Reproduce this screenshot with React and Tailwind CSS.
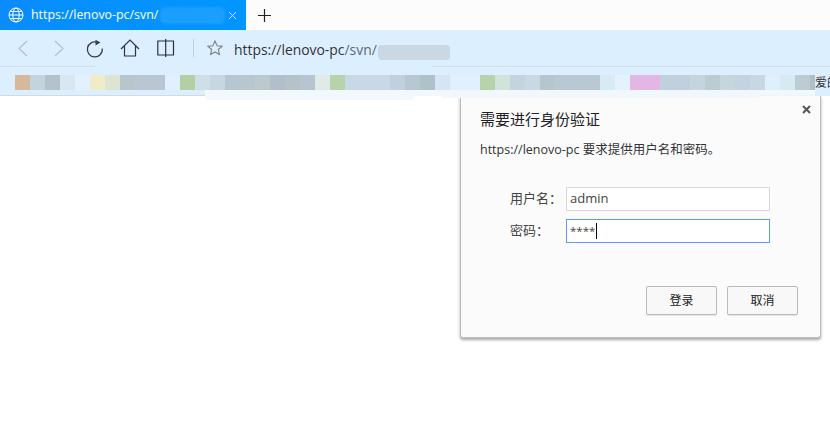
const FONT = "font-['Open_Sans','Noto_Sans_CJK_SC',sans-serif]";

const blocks = [
  ["#dcefff", 15], ["#d6b89c", 15], ["#c4d4dd", 15], ["#b3c3cb", 15], ["#d9e7f1", 15], ["#e2f1fd", 15],
  ["#f0ecc8", 15], ["#dde4d3", 15], ["#b8c5ca", 15], ["#bac7d2", 30], ["#e0f0fe", 15],
  ["#b5cfa5", 15], ["#cfdfe8", 15], ["#c7d7e2", 15], ["#b8c6cf", 30], ["#bccad0", 15], ["#b0bfca", 15], ["#b5c3c9", 15], ["#b7c5d1", 15],
  ["#e0ebe8", 15], ["#b8d2ac", 15], ["#c9d8e5", 15], ["#c8d8e4", 30], ["#c1d0dc", 15], ["#b8c7d3", 15], ["#afc1c9", 15], ["#d5e5f3", 15], ["#e0f0fd", 30],
  ["#b8d2ac", 15], ["#d0e4dc", 15], ["#c3d4de", 15], ["#c9d8e5", 15], ["#b7c6cc", 15], ["#b9c8d3", 45], ["#d7ebf3", 15], ["#e4f2fd", 15],
  ["#e4b6e4", 30], ["#c0d0dc", 30], ["#c5d4dd", 15], ["#bdccd2", 15], ["#c7d6dd", 15], ["#c3d3e0", 15], ["#c9d7e4", 15], ["#e0f0fa", 15],
  ["#d7eaf3", 15], ["#bdcbd2", 15], ["#aebfc6", 5],
];

function Globe() {
  return (
    <svg width="16" height="16" viewBox="0 0 16 16" fill="none" stroke="#fff" strokeWidth="1">
      <circle cx="8" cy="8" r="7" />
      <ellipse cx="8" cy="8" rx="3.2" ry="7" />
      <path d="M1 8h14M2 4.500h12M2 11.500h12" />
    </svg>
  );
}

function ToolbarIcons() {
  return (
    <>
      <svg className="ml-[17px]" width="11" height="17" viewBox="0 0 11 17" fill="none" stroke="#b4bfc8" strokeWidth="1.2">
        <path d="M10 1 2 8.500l8 7.500" />
      </svg>
      <svg className="ml-[26px]" width="11" height="17" viewBox="0 0 11 17" fill="none" stroke="#b4bfc8" strokeWidth="1.2">
        <path d="M1 1l8 7.500L1 16" />
      </svg>
      <svg className="ml-[21px]" width="18" height="19" viewBox="0 0 18 19" fill="none" stroke="#3a3f48" strokeWidth="1.3">
        <path d="M11.500 3.400A7.500 7.500 0 1 0 16.300 9.500" />
        <path d="M9.500.8l5 2.800-5 2.800z" fill="#3a3f48" stroke="none" />
      </svg>
      <svg className="ml-[16px]" width="20" height="18" viewBox="0 0 20 18" fill="none" stroke="#2f3440" strokeWidth="1.2">
        <path d="M1 10 10 1l9 9M4.500 7V17h11V7" />
      </svg>
      <svg className="ml-[17px]" width="18" height="18" viewBox="0 0 18 18" fill="none" stroke="#2a3040" strokeWidth="1.2">
        <path d="M.8 2h15.700v14H.8zM8.700 0v18" />
      </svg>
      <div className="ml-[18px] h-[18px] w-px bg-[#c2ced8]" />
      <svg className="ml-[13px]" width="16" height="16" viewBox="0 0 16 16" fill="none" stroke="#7c838a" strokeWidth="1.1">
        <path d="M8 1l2.100 4.700 5 .5-3.800 3.300 1.100 5L8 12l-4.400 2.500 1.100-5L.9 6.200l5-.5z" />
      </svg>
    </>
  );
}

function Field({ label, value, focused }) {
  return (
    <div className="flex items-center">
      <span className="w-[56px] text-[13px] text-[#444]">{label}</span>
      <div className={`flex h-[24px] w-[204px] items-center border px-[3px] bg-white text-[#444] ${focused ? "border-[#5b9bf5] text-[11.500px]" : "border-[#d8d8d8] text-[13px]"}`}>
        {value}
        {focused && <span className="ml-px h-[16px] w-px bg-black" />}
      </div>
    </div>
  );
}

export default function App() {
  return (
    <div className={`${FONT} h-[424px] w-[830px] overflow-hidden bg-white`}>
      <div className="flex h-[30px] bg-[#fcfcfc]">
        <div className="flex w-[246px] items-center bg-gradient-to-r from-[#0a8cfd] to-[#0096ff] pl-[8px] text-white">
          <Globe />
          <span className="ml-[7px] w-[126px] text-[12.400px] font-medium whitespace-nowrap">https://lenovo-pc/svn/</span>
          <div className="ml-[3px] h-[17px] w-[65px] rounded-md bg-[#1a9fff] blur-[1px]" />
          <svg className="ml-[3px]" width="9" height="9" viewBox="0 0 9 9" stroke="#d6edff" strokeWidth="1">
            <path d="M1 1l7 7M8 1l-7 7" />
          </svg>
        </div>
        <svg className="ml-[12px] self-center" width="13" height="13" viewBox="0 0 13 13" stroke="#222" strokeWidth="1.2">
          <path d="M6.500 0v13M0 6.500h13" />
        </svg>
      </div>

      <div className="flex h-[36px] items-center bg-[#dcefff]">
        <ToolbarIcons />
        <span className="mt-[4px] ml-[11px] w-[144px] text-[13.900px] whitespace-nowrap text-[#333]">
          https://lenovo-pc<span className="text-[#5c6a75]">/svn/</span>
        </span>
        <div className="mt-[8px] h-[15px] w-[72px] rounded-sm bg-[#c9d8e3] blur-[0.5px]" />
      </div>

      <div className="flex h-px bg-[#cfe0ec]">
        <div className="ml-[95px] w-[337px] bg-[#dcefff]" />
      </div>

      <div className="flex h-[23px] items-end overflow-hidden bg-[#dcefff]">
        {blocks.map(([color, width], i) => (
          <div key={i} className="h-[15px] shrink-0" style={{ backgroundColor: color, width }} />
        ))}
        <span className="shrink-0 text-[12px] leading-[15px] whitespace-nowrap text-[#333]">爱的</span>
      </div>

      <div className="relative flex h-[6px]">
        <div className="w-[205px] border-b border-[#d0dbe3] bg-[#dcefff]" />
        <div className="flex-1 bg-[#f0f9fd]" />
        <div className="w-[15px] bg-[#dcefff]" />
        <div className="absolute top-0 left-[205px] z-10 h-[10px] w-[210px] rounded-b-sm bg-[#f1f9fd]" />
        <div className="absolute top-0 left-[440px] z-10 h-[8px] w-[320px] rounded-b-sm bg-[#f1f8fc]" />
      </div>

      <div className="flex justify-end pr-[9px]">
        <div className="relative h-[242px] w-[361px] rounded-b-[3px] border border-t-0 border-[#bdbdbd] bg-[#fbfbfb] shadow-[0_2px_3px_rgba(0,0,0,0.35)]">
          <svg className="absolute top-[9px] right-[9px]" width="9" height="9" viewBox="0 0 9 9" stroke="#555" strokeWidth="2">
            <path d="M1 1l7 7M8 1l-7 7" />
          </svg>
          <h1 className="ml-[19px] pt-[12px] text-[15px] leading-[22px] text-[#222]">需要进行身份验证</h1>
          <p className="mt-[11px] ml-[19px] text-[12.500px] leading-[18px] text-[#333]">https://lenovo-pc 要求提供用户名和密码。</p>
          <div className="mt-[28px] ml-[49px] flex flex-col gap-[8px]">
            <Field label="用户名：" value="admin" />
            <Field label="密码：" value="****" focused />
          </div>
          <div className="mt-[43px] mr-[22px] flex justify-end gap-[10px]">
            <button className="h-[29px] w-[71px] rounded-[2px] border border-[#bbb] bg-[#f8f8f8] text-[12px] text-[#222] shadow-[0_1px_1px_rgba(0,0,0,0.1)]">登录</button>
            <button className="h-[29px] w-[71px] rounded-[2px] border border-[#bbb] bg-[#f8f8f8] text-[12px] text-[#222] shadow-[0_1px_1px_rgba(0,0,0,0.1)]">取消</button>
          </div>
        </div>
      </div>
    </div>
  );
}
